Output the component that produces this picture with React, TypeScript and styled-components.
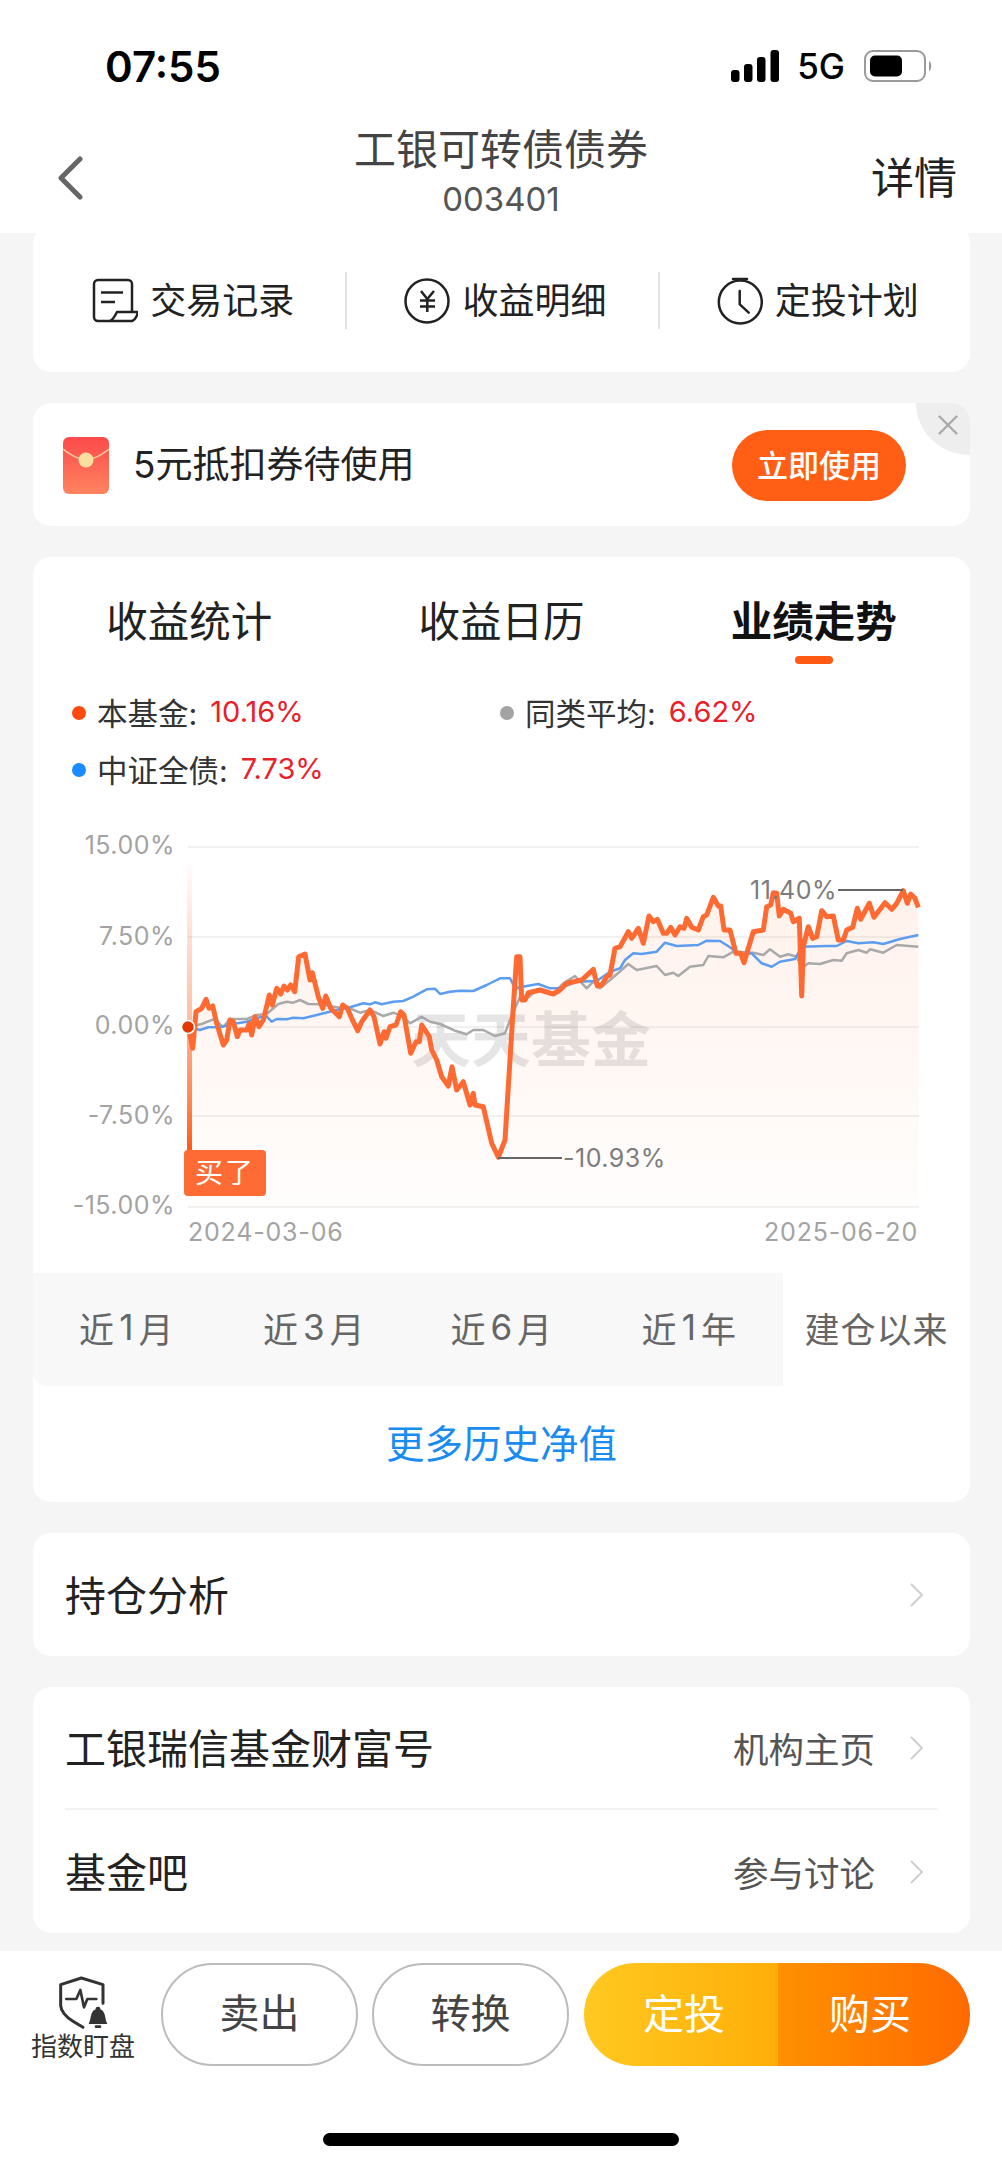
import { FC } from "react";
import styled, { createGlobalStyle } from "styled-components";
import { X } from "lucide-react";

type Point = [number, number];

// chart coordinates are read off two crops of the page, so they get shifted to page pixels here
const leftCrop = (points: Point[]): Point[] => points.map(([x, y]) => [60 + x / 3, 820 + y / 3]);
const rightCrop = (points: Point[]): Point[] => points.map(([x, y]) => [500 + x / 3, 840 + y / 3]);
const toLine = (points: Point[]) => points.map(([x, y]) => `${x.toFixed(1)},${y.toFixed(1)}`).join(" ");

const fundLine: Point[] = [
  ...leftCrop([
    [385, 620], [398, 685], [408, 575], [425, 565], [438, 538], [447, 565], [458, 558], [470, 610], [490, 675],
    [500, 660], [510, 600], [520, 605], [532, 650], [540, 630], [560, 630], [568, 610], [575, 645], [585, 590],
    [597, 620], [610, 600], [628, 525], [637, 555], [650, 505], [662, 522], [672, 498], [682, 510], [692, 495],
    [704, 515], [716, 410], [735, 402], [750, 480], [757, 458], [775, 530], [788, 565], [797, 528], [812, 565],
    [838, 590], [848, 555], [862, 565], [875, 595], [893, 632], [905, 605], [930, 570], [942, 590], [960, 672],
    [972, 635], [978, 655], [990, 620], [1008, 615], [1022, 575], [1032, 585], [1052, 700], [1068, 665],
    [1078, 665], [1085, 615], [1108, 650], [1115, 690], [1130, 720], [1145, 770], [1165, 798], [1176, 740],
    [1190, 810], [1210, 785], [1230, 855], [1240, 820], [1245, 855], [1270, 860], [1295, 970], [1315, 1012],
    [1335, 960], [1345, 800],
  ]),
  ...rightCrop([
    [40, 500], [50, 350], [60, 350], [65, 480], [75, 480], [85, 458], [120, 450], [160, 462], [180, 450],
    [200, 430], [245, 420], [280, 388], [292, 438], [305, 435], [320, 410], [330, 405], [345, 325], [360, 320],
    [385, 275], [395, 295], [415, 265], [430, 310], [447, 228], [460, 245], [472, 238], [490, 280], [500, 280],
    [512, 262], [525, 285], [540, 260], [552, 265], [560, 235], [575, 262], [595, 270], [610, 230], [620, 225],
    [640, 172], [655, 198], [662, 198], [672, 270], [690, 270], [708, 340], [722, 340], [732, 368], [745, 325],
    [760, 275], [790, 270], [800, 200], [812, 195], [820, 158], [830, 160], [838, 228], [850, 208], [872, 220],
    [880, 245], [898, 235], [905, 468], [910, 320], [925, 260], [938, 295], [950, 290], [965, 212], [980, 230],
    [1000, 228], [1015, 300], [1030, 300], [1040, 270], [1058, 262], [1072, 205], [1082, 238], [1108, 190],
    [1122, 232], [1155, 188], [1175, 208], [1190, 190], [1210, 152], [1222, 190], [1232, 162], [1245, 175],
    [1255, 202],
  ]),
];

const indexLine: Point[] = [
  ...leftCrop([
    [385, 620], [420, 630], [445, 622], [480, 622], [520, 612], [560, 605], [600, 592], [620, 590], [635, 605],
    [650, 597], [680, 598], [700, 593], [730, 595], [770, 585], [830, 570], [870, 562], [910, 550], [930, 553],
    [945, 547], [965, 553], [1000, 545], [1030, 543], [1060, 530], [1100, 508], [1125, 506], [1140, 522],
    [1170, 515], [1200, 512], [1240, 513], [1280, 495], [1320, 475], [1350, 475],
  ]),
  ...rightCrop([
    [45, 445], [80, 438], [115, 432], [150, 445], [180, 445], [230, 425], [290, 423], [330, 395], [360, 385],
    [375, 360], [400, 340], [425, 342], [470, 335], [495, 308], [530, 318], [595, 315], [620, 302], [660, 303],
    [690, 322], [720, 345], [755, 340], [785, 370], [815, 380], [840, 365], [885, 357], [905, 320], [980, 318],
    [1010, 318], [1040, 303], [1075, 310], [1120, 307], [1150, 312], [1200, 297], [1255, 285],
  ]),
];

const peerLine: Point[] = [
  ...leftCrop([
    [385, 620], [425, 612], [460, 598], [490, 620], [510, 597], [560, 597], [590, 585], [620, 582], [655, 552],
    [680, 545], [700, 548], [720, 540], [745, 552], [780, 553], [830, 562], [870, 565], [900, 578], [930, 570],
    [970, 588], [1000, 578], [1030, 590], [1050, 610], [1085, 590], [1110, 605], [1140, 612], [1185, 632],
    [1220, 643], [1240, 630], [1270, 630], [1305, 648], [1335, 640], [1350, 600],
  ]),
  ...rightCrop([
    [60, 470], [75, 480], [110, 450], [160, 460], [190, 430], [225, 408], [260, 445], [280, 425], [300, 445],
    [340, 412], [385, 372], [410, 390], [470, 378], [495, 405], [520, 398], [535, 408], [570, 380], [610, 375],
    [625, 348], [670, 352], [700, 335], [760, 338], [790, 345], [810, 328], [840, 350], [865, 343], [890, 350],
    [905, 385], [925, 370], [960, 372], [1000, 360], [1025, 362], [1040, 340], [1075, 330], [1100, 338],
    [1110, 328], [1150, 338], [1190, 315], [1255, 320],
  ]),
];

const gridLines = [847, 937, 1027, 1116, 1207];
const axisLabels: { text: string; y: number }[] = [
  { text: "15.00%", y: 845 },
  { text: "7.50%", y: 936 },
  { text: "0.00%", y: 1025 },
  { text: "-7.50%", y: 1115 },
  { text: "-15.00%", y: 1205 },
];

const GlobalStyle = createGlobalStyle`
  html, body {
    margin: 0;
    padding: 0;
    background: #f5f5f5;
  }
  * {
    box-sizing: border-box;
  }
`;

const ChevronRight: FC = () => (
  <RowChevron viewBox="0 0 15 26">
    <polyline points="2,2 13,13 2,24" fill="none" stroke="#cfcfcf" strokeWidth="2" strokeLinejoin="round" />
  </RowChevron>
);

const Chart: FC = () => (
  <ChartBox>
    <svg width="937" height="453" viewBox="33 820 937 453">
      <defs>
        <linearGradient id="areaFill" gradientUnits="userSpaceOnUse" x1="0" y1="880" x2="0" y2="1207">
          <stop offset="0" stopColor="#ff5a14" stopOpacity="0.085" />
          <stop offset="1" stopColor="#ff5a14" stopOpacity="0.01" />
        </linearGradient>
        <linearGradient id="buyLine" gradientUnits="userSpaceOnUse" x1="0" y1="860" x2="0" y2="1150">
          <stop offset="0" stopColor="#ff5a14" stopOpacity="0" />
          <stop offset="0.55" stopColor="#ff5a14" stopOpacity="0.4" />
          <stop offset="0.85" stopColor="#ff5a14" stopOpacity="0.75" />
          <stop offset="1" stopColor="#ff5a14" stopOpacity="1" />
        </linearGradient>
      </defs>

      {gridLines.map((y) => (
        <line key={y} x1="188" x2="919" y1={y} y2={y} stroke="#ececec" strokeWidth="1.5" />
      ))}
      {axisLabels.map((label) => (
        <AxisText key={label.text} x="175" y={label.y} textAnchor="end" dominantBaseline="central">
          {label.text}
        </AxisText>
      ))}

      <polygon points={`${toLine(fundLine)} 919,1207 188,1207`} fill="url(#areaFill)" />
      <Watermark x="411" y="1062">天天基金</Watermark>

      <polyline points={toLine(peerLine)} fill="none" stroke="#a9a9a9" strokeWidth="2.5" strokeLinejoin="round" />
      <polyline points={toLine(indexLine)} fill="none" stroke="#5c9df0" strokeWidth="2.5" strokeLinejoin="round" />
      <rect x="187" y="860" width="5" height="295" fill="url(#buyLine)" />
      <polyline points={toLine(fundLine)} fill="none" stroke="#ff6a33" strokeWidth="5" strokeLinejoin="round" />
      <circle cx="188" cy="1027" r="6.5" fill="#e03a00" stroke="#fff" strokeWidth="1.5" />

      <line x1="838" x2="903" y1="890" y2="890" stroke="#666" strokeWidth="2" />
      <ExtremeText x="750" y="890" dominantBaseline="central">11.40%</ExtremeText>
      <line x1="498" x2="562" y1="1158" y2="1158" stroke="#666" strokeWidth="2" />
      <ExtremeText x="563" y="1158" dominantBaseline="central">-10.93%</ExtremeText>

      <DateText x="188" y="1232" dominantBaseline="central">2024-03-06</DateText>
      <DateText x="918" y="1232" textAnchor="end" dominantBaseline="central">2025-06-20</DateText>
    </svg>
    <BuyTag>买了</BuyTag>
  </ChartBox>
);

export default function App(): JSX.Element {
  return (
    <>
      <GlobalStyle />
      <Page>
        <Header>
          <StatusBar>
            <Time>07:55</Time>
            <StatusIcons>
              <svg width="49" height="32" viewBox="0 0 49 32">
                <rect x="0" y="20" width="8.5" height="12" rx="3" fill="#000" />
                <rect x="13" y="14" width="8.5" height="18" rx="3" fill="#000" />
                <rect x="26" y="7" width="8.5" height="25" rx="3" fill="#000" />
                <rect x="39.5" y="0" width="8.5" height="32" rx="3" fill="#000" />
              </svg>
              <Network>5G</Network>
              <svg width="70" height="32" viewBox="0 0 70 32">
                <rect x="1" y="1" width="60" height="30" rx="8" fill="none" stroke="#9a9a9a" strokeWidth="2" />
                <rect x="6" y="5.5" width="32" height="21" rx="5" fill="#000" />
                <path d="M65 11 C68 12.5 68 19.5 65 21 Z" fill="#9a9a9a" />
              </svg>
            </StatusIcons>
          </StatusBar>
          <NavBar>
            <BackIcon viewBox="0 0 28 44">
              <polyline points="24,3 5,22 24,41" fill="none" stroke="#666" strokeWidth="5" strokeLinecap="round" strokeLinejoin="round" />
            </BackIcon>
            <TitleStack>
              <Title>工银可转债债券</Title>
              <Code>003401</Code>
            </TitleStack>
            <Detail>详情</Detail>
          </NavBar>
        </Header>

        <Content>
          <ShortcutCard>
            <Shortcut>
              <ShortcutIcon viewBox="12 8 46 50">
                <g fill="none" stroke="#222" strokeWidth="2.5" strokeLinejoin="round">
                  <path d="M30 53 H18 a4 4 0 0 1 -4 -4 V16 a4 4 0 0 1 4 -4 H48 a4 4 0 0 1 4 4 V44" />
                  <path d="M21 24.5 H43 M21 34 H35" />
                  <path d="M30 53 C33 52 35 48 37 44 H58 C57 48 55 52 52 53 Z" />
                </g>
              </ShortcutIcon>
              <ShortcutText>交易记录</ShortcutText>
            </Shortcut>
            <Shortcut>
              <ShortcutIcon viewBox="11 9 46 50">
                <g fill="none" stroke="#222" strokeWidth="2.5">
                  <circle cx="34" cy="34" r="21.5" />
                  <path d="M28 24 L34.3 32 L41 24 M34.3 32 V45 M27 33.5 H42 M27 39.5 H42" />
                </g>
              </ShortcutIcon>
              <ShortcutText>收益明细</ShortcutText>
            </Shortcut>
            <Shortcut>
              <ShortcutIcon viewBox="9 9 46 50">
                <g fill="none" stroke="#222" strokeWidth="2.5" strokeLinecap="round">
                  <circle cx="32.3" cy="35" r="21.5" />
                  <path d="M25 12 H39 M31.7 24 V37.3 L40.7 45.7" />
                </g>
              </ShortcutIcon>
              <ShortcutText>定投计划</ShortcutText>
            </Shortcut>
          </ShortcutCard>

          <CouponCard>
            <svg width="46" height="57" viewBox="0 0 46 57">
              <defs>
                <linearGradient id="packet" x1="0" y1="0" x2="0" y2="1">
                  <stop offset="0" stopColor="#fc4a4a" />
                  <stop offset="1" stopColor="#ff8460" />
                </linearGradient>
              </defs>
              <rect width="46" height="57" rx="6" fill="url(#packet)" />
              <path d="M0 12 C8 18 14 22 23 23 C32 22 38 18 46 12" fill="none" stroke="#ffc9a0" strokeWidth="1.5" />
              <circle cx="23" cy="23" r="7.5" fill="#fbdf9f" />
            </svg>
            <CouponText>5元抵扣券待使用</CouponText>
            <UseButton>立即使用</UseButton>
            <CloseCorner>
              <X size={34} strokeWidth={1.6} color="#a8a8a8" />
            </CloseCorner>
          </CouponCard>

          <PerformanceCard>
            <Tabs>
              <Tab>收益统计</Tab>
              <Tab>收益日历</Tab>
              <Tab $active>业绩走势</Tab>
            </Tabs>
            <Legend>
              <LegendItem>
                <Dot $color="#ff4a0f" />
                本基金:<LegendValue>10.16%</LegendValue>
              </LegendItem>
              <LegendItem>
                <Dot $color="#a3a3a3" />
                同类平均:<LegendValue>6.62%</LegendValue>
              </LegendItem>
              <LegendItem>
                <Dot $color="#1a8cff" />
                中证全债:<LegendValue>7.73%</LegendValue>
              </LegendItem>
            </Legend>
            <Chart />
            <Ranges>
              <GrayRanges>
                <Range>近<RangeNumber>1</RangeNumber>月</Range>
                <Range>近<RangeNumber>3</RangeNumber>月</Range>
                <Range>近<RangeNumber>6</RangeNumber>月</Range>
                <Range>近<RangeNumber>1</RangeNumber>年</Range>
              </GrayRanges>
              <Range>建仓以来</Range>
            </Ranges>
            <MoreLink>更多历史净值</MoreLink>
          </PerformanceCard>

          <ListCard>
            <ListRow>
              <RowTitle>持仓分析</RowTitle>
              <ChevronRight />
            </ListRow>
          </ListCard>

          <ListCard>
            <ListRow $divider>
              <RowTitle>工银瑞信基金财富号</RowTitle>
              <RowHint>机构主页</RowHint>
              <ChevronRight />
            </ListRow>
            <ListRow>
              <RowTitle>基金吧</RowTitle>
              <RowHint>参与讨论</RowHint>
              <ChevronRight />
            </ListRow>
          </ListCard>
        </Content>

        <Footer>
          <ActionRow>
            <Monitor>
              <svg width="50" height="54" viewBox="30 36 150 162">
                <g fill="none" stroke="#333" strokeWidth="9" strokeLinejoin="round" strokeLinecap="round">
                  <path d="M165 118 V62 L100 42 L38 62 V125 Q40 150 75 172 L105 190" />
                  <path d="M55 105 H85 L97 78 L108 130 L118 105 H145" strokeWidth="8" />
                </g>
                <path d="M150 128 a7 7 0 0 1 7 8 C174 142 170 166 178 180 H122 C130 166 126 142 143 136 a7 7 0 0 1 7 -8 Z" fill="#333" />
                <rect x="140" y="184" width="20" height="8" rx="4" fill="#333" />
              </svg>
              <MonitorLabel>指数盯盘</MonitorLabel>
            </Monitor>
            <OutlineButton>卖出</OutlineButton>
            <OutlineButton>转换</OutlineButton>
            <BuyGroup>
              <InvestPart>定投</InvestPart>
              <BuyPart>购买</BuyPart>
            </BuyGroup>
          </ActionRow>
          <HomeIndicator />
        </Footer>
      </Page>
    </>
  );
}

const fontStack = `Inter, "Noto Sans CJK SC", sans-serif`;

const Page = styled.div`
  width: 1002px;
  height: 2167px;
  display: flex;
  flex-direction: column;
  overflow: hidden;
  background: #f5f5f5;
  font-family: ${fontStack};
`;

const Header = styled.header`
  position: relative;
  z-index: 1;
  height: 233px;
  background: #fff;
`;

const StatusBar = styled.div`
  height: 123px;
  padding: 43px 68px 0 105px;
  display: flex;
  justify-content: space-between;
`;

const Time = styled.div`
  font-size: 42px;
  font-weight: 600;
  line-height: 48px;
  color: #000;
`;

const StatusIcons = styled.div`
  height: 46px;
  display: flex;
  align-items: center;
  gap: 17px;
`;

const Network = styled.span`
  margin-right: 2px;
  font-size: 35px;
  font-weight: 500;
  color: #000;
`;

const NavBar = styled.div`
  height: 110px;
  padding: 0 47px;
  display: grid;
  grid-template-columns: 1fr auto 1fr;
  align-items: center;
`;

const BackIcon = styled.svg`
  width: 28px;
  height: 44px;
  margin-left: 9px;
`;

const TitleStack = styled.div`
  margin-top: -13px;
  display: flex;
  flex-direction: column;
  align-items: center;
`;

const Title = styled.div`
  font-size: 42px;
  line-height: 52px;
  color: #444;
`;

const Code = styled.div`
  margin-top: 2px;
  font-size: 33px;
  line-height: 42px;
  color: #555;
`;

const Detail = styled.div`
  justify-self: end;
  margin: 0 -2px 6px 0;
  font-size: 43px;
  color: #222;
`;

const Content = styled.main`
  flex: 1;
  padding: 0 32px 0 33px;
  display: flex;
  flex-direction: column;
  gap: 31px;
`;

const Card = styled.section`
  position: relative;
  background: #fff;
  border-radius: 18px;
  overflow: hidden;
`;

const ShortcutCard = styled(Card)`
  height: 147px;
  margin-top: -8px;
  padding-top: 4px;
  display: grid;
  grid-template-columns: repeat(3, 1fr);
  align-items: center;
`;

const Shortcut = styled.div`
  position: relative;
  padding-left: 8px;
  display: flex;
  justify-content: center;
  align-items: center;
  gap: 12px;

  & + &::before {
    content: "";
    position: absolute;
    left: 0;
    top: 0;
    bottom: 0;
    width: 2px;
    background: #e2e2e2;
  }
`;

const ShortcutIcon = styled.svg`
  width: 46px;
  height: 50px;
`;

const ShortcutText = styled.span`
  padding-bottom: 5px;
  font-size: 36px;
  color: #222;
`;

const CouponCard = styled(Card)`
  height: 123px;
  padding: 2px 64px 0 30px;
  display: flex;
  align-items: center;
`;

const CouponText = styled.span`
  margin-left: 24px;
  padding-bottom: 8px;
  font-size: 37px;
  color: #222;
`;

const UseButton = styled.button`
  margin-left: auto;
  width: 174px;
  height: 71px;
  padding: 0 0 4px;
  border: 0;
  border-radius: 36px;
  background: #ff5e14;
  color: #fff;
  font-family: ${fontStack};
  font-size: 31px;
  font-weight: 500;
`;

const CloseCorner = styled.div`
  position: absolute;
  top: 0;
  right: 0;
  width: 54px;
  height: 52px;
  padding: 5px 5px 0 0;
  display: flex;
  justify-content: flex-end;
  background: #eee;
  border-bottom-left-radius: 100%;
`;

const PerformanceCard = styled(Card)`
  height: 945px;
`;

const Tabs = styled.div`
  height: 107px;
  padding-top: 40px;
  display: grid;
  grid-template-columns: repeat(3, 1fr);
`;

const Tab = styled.div<{ $active?: boolean }>`
  position: relative;
  height: 50px;
  text-align: center;
  font-size: 41.5px;
  line-height: 50px;
  font-weight: ${({ $active }) => ($active ? 700 : 400)};
  color: ${({ $active }) => ($active ? "#111" : "#222")};

  &::after {
    content: "";
    display: ${({ $active }) => ($active ? "block" : "none")};
    width: 38px;
    height: 8px;
    margin: 9px auto 0;
    border-radius: 4px;
    background: #ff5a14;
  }
`;

const Legend = styled.div`
  margin-top: 19px;
  padding-left: 39px;
  display: grid;
  grid-template-columns: 428px 1fr;
  grid-auto-rows: 57px;
`;

const LegendItem = styled.div`
  display: flex;
  align-items: center;
  font-size: 30.5px;
  color: #333;
`;

const Dot = styled.i<{ $color: string }>`
  width: 14px;
  height: 14px;
  margin: 3px 11px 0 0;
  border-radius: 50%;
  background: ${({ $color }) => $color};
`;

const LegendValue = styled.span`
  margin-left: 13px;
  font-size: 29px;
  color: #e8202a;
`;

const ChartBox = styled.div`
  position: relative;
  margin-top: 23px;
  height: 453px;

  svg {
    display: block;
  }
`;

const AxisText = styled.text`
  font-family: ${fontStack};
  font-size: 25px;
  letter-spacing: 0.5px;
  fill: #a3a3a3;
`;

const DateText = styled(AxisText)`
  letter-spacing: 0.8px;
`;

const ExtremeText = styled.text`
  font-family: ${fontStack};
  font-size: 25px;
  letter-spacing: 0.5px;
  fill: #7c7c7c;
`;

const Watermark = styled.text`
  font-family: "Noto Sans CJK SC", sans-serif;
  font-size: 60px;
  font-weight: 700;
  fill: #000;
  fill-opacity: 0.1;
`;

const BuyTag = styled.div`
  position: absolute;
  left: 151px;
  top: 330px;
  width: 82px;
  height: 46px;
  border-radius: 4px;
  background: #ff6b35;
  color: #fff;
  font-size: 28px;
  letter-spacing: 2px;
  line-height: 46px;
  text-align: center;
`;

const Ranges = styled.div`
  height: 113px;
  display: grid;
  grid-template-columns: 750px 1fr;
`;

const GrayRanges = styled.div`
  display: grid;
  grid-template-columns: repeat(4, 1fr);
  background: #f8f8f8;
  border-bottom-left-radius: 14px;
`;

const Range = styled.div`
  padding-bottom: 5px;
  display: flex;
  justify-content: center;
  align-items: center;
  font-size: 35px;
  letter-spacing: 1px;
  color: #666;
`;

const RangeNumber = styled.span`
  padding: 0 4px;
`;

const MoreLink = styled.div`
  height: 116px;
  padding-bottom: 6px;
  display: flex;
  justify-content: center;
  align-items: center;
  font-size: 38.5px;
  color: #1a8cf0;
`;

const ListCard = styled(Card)`
  padding: 0 32px;
`;

const ListRow = styled.div<{ $divider?: boolean }>`
  height: 123px;
  display: flex;
  align-items: center;
  border-bottom: ${({ $divider }) => ($divider ? "2px solid #f2f2f2" : "0")};
`;

const RowTitle = styled.span`
  margin-right: auto;
  padding-bottom: 3px;
  font-size: 41px;
  color: #222;
`;

const RowHint = styled.span`
  font-size: 35.5px;
  color: #555;
`;

const RowChevron = styled.svg`
  width: 15px;
  height: 26px;
  margin: 0 14px 0 34px;
`;

const Footer = styled.footer`
  height: 216px;
  padding: 12px 32px 0;
  display: flex;
  flex-direction: column;
  background: #fff;
`;

const ActionRow = styled.div`
  height: 103px;
  display: flex;
  align-items: flex-start;
  gap: 14px;
`;

const Monitor = styled.div`
  width: 102px;
  margin-right: 13px;
  padding-top: 13px;
  display: flex;
  flex-direction: column;
  align-items: center;

  svg {
    display: block;
  }
`;

const MonitorLabel = styled.span`
  font-size: 26px;
  line-height: 34px;
  color: #333;
  white-space: nowrap;
`;

const OutlineButton = styled.button`
  width: 197px;
  height: 103px;
  padding: 0 0 7px;
  border: 2px solid #bcbcbc;
  border-radius: 52px;
  background: #fff;
  color: #444;
  font-family: ${fontStack};
  font-size: 40px;
`;

const BuyGroup = styled.div`
  width: 386px;
  height: 103px;
  margin-left: 1px;
  display: flex;
  border-radius: 52px;
  overflow: hidden;
  color: #fff;
  font-size: 41px;
`;

const InvestPart = styled.div`
  width: 194px;
  display: flex;
  justify-content: center;
  align-items: center;
  padding: 0 0 7px 6px;
  background: linear-gradient(90deg, #ffc921, #ffae08);
`;

const BuyPart = styled.div`
  flex: 1;
  display: flex;
  justify-content: center;
  align-items: center;
  padding: 0 8px 7px 0;
  background: linear-gradient(90deg, #ff9000, #ff6a00);
`;

const HomeIndicator = styled.div`
  width: 356px;
  height: 13px;
  margin: 67px auto 0;
  border-radius: 7px;
  background: #000;
`;
